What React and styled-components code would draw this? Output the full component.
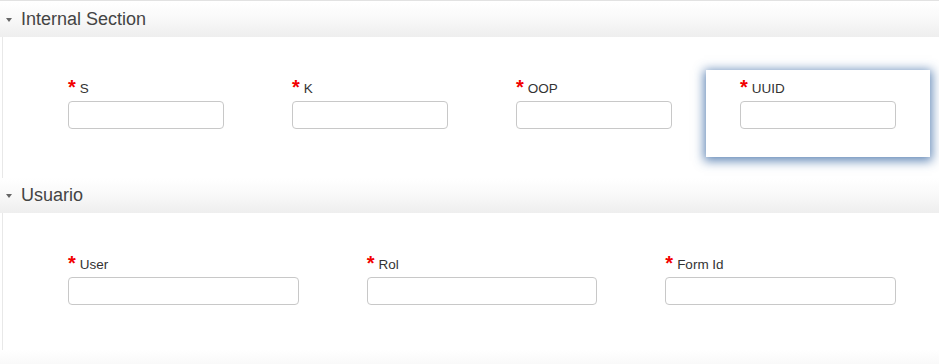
import React from "react";
import styled, { createGlobalStyle } from "styled-components";

const Global = createGlobalStyle`
  body {
    margin: 0;
    background: #fff;
    font-family: "Liberation Sans", Arial, sans-serif;
  }
`;

const Page = styled.div`
  width: 939px;
  border-top: 1px solid #e2e2e2;
  overflow: hidden;
`;

const Header = styled.div`
  height: 35px;
  margin-top: ${(p) => (p.first ? "1px" : "0")};
  display: flex;
  align-items: center;
  padding-left: 6px;
  background: linear-gradient(to bottom, #ffffff 0%, #f9f9f9 45%, #eeeeee 100%);
  color: #444;
  font-size: 18px;
  box-sizing: border-box;
`;

const Caret = styled.span`
  width: 0;
  height: 0;
  border-left: 3.5px solid transparent;
  border-right: 3.5px solid transparent;
  border-top: 4px solid #666;
  margin-right: 9px;
  margin-top: 1px;
`;

const Body = styled.div`
  margin-left: 2px;
  border-left: 1px solid #e8e8e8;
  padding: 33px 9px ${(p) => p.bottom}px 31px;
`;

const Grid = styled.div`
  display: grid;
  grid-template-columns: repeat(${(p) => p.cols}, 1fr);
`;

const Cell = styled.div`
  padding: 8px 34px 28px;
  background: #fff;
  box-shadow: ${(p) =>
    p.focused ? "0 2px 10px 2px rgba(40, 92, 155, 0.72)" : "none"};
`;

const Label = styled.div`
  height: 21px;
  display: flex;
  align-items: flex-start;
  color: #333;
  font-size: 13.5px;
  line-height: 21px;
  margin-bottom: 2px;
`;

const Star = styled.span`
  color: #f20000;
  font-size: 20px;
  font-weight: bold;
  line-height: 19px;
  margin-right: 4px;
`;

const Input = styled.input`
  display: block;
  width: 100%;
  height: 28px;
  box-sizing: border-box;
  border: 1px solid #c8c8c8;
  border-radius: 4px;
  background: #fff;
  outline: none;
`;

const Strip = styled.div`
  height: 20px;
  background: linear-gradient(to bottom, #ffffff 0%, #f6f6f6 100%);
`;

function Field({ label, focused }) {
  return (
    <Cell focused={focused}>
      <Label>
        <Star>*</Star>
        {label}
      </Label>
      <Input />
    </Cell>
  );
}

function Section({ title, fields, bottom, first, focus }) {
  return (
    <>
      <Header first={first}>
        <Caret />
        {title}
      </Header>
      <Body bottom={bottom}>
        <Grid cols={fields.length}>
          {fields.map((f) => (
            <Field key={f} label={f} focused={f === focus} />
          ))}
        </Grid>
      </Body>
    </>
  );
}

export default function App() {
  return (
    <Page>
      <Global />
      <Section
        first
        title="Internal Section"
        fields={["S", "K", "OOP", "UUID"]}
        focus="UUID"
        bottom={21}
      />
      <Section title="Usuario" fields={["User", "Rol", "Form Id"]} bottom={17} />
      <Strip />
    </Page>
  );
}
